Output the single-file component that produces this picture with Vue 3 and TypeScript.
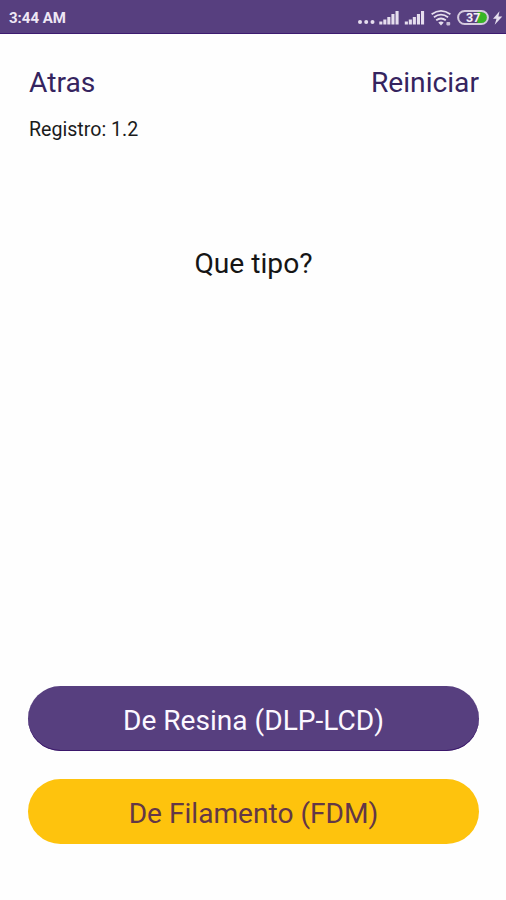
<script setup lang="ts">
interface Option {
  label: string
  tone: 'primary' | 'accent'
}

const options: Option[] = [
  { label: 'De Resina (DLP-LCD)', tone: 'primary' },
  { label: 'De Filamento (FDM)', tone: 'accent' },
]
</script>

<template>
  <div class="screen">
    <header class="status">
      <span class="clock">3:44 AM</span>
      <svg class="indicators" width="148" height="34" viewBox="358 0 148 34" aria-hidden="true">
        <g class="fill">
          <circle cx="360" cy="22" r="2" />
          <circle cx="366.2" cy="22" r="2" />
          <circle cx="372.5" cy="22" r="2" />
          <path d="M379.3 21.5h3.1v3h-3.1zM383.3 19.5h3.1v5h-3.1zM387.3 17h3.1v7.5h-3.1zM391.4 14h3.1v10.5h-3.1zM395.5 11h3.1v13.5h-3.1z" />
          <path d="M404.8 21.5h3.1v3h-3.1zM408.8 19.5h3.1v5h-3.1zM412.8 17h3.1v7.5h-3.1zM416.9 14h3.1v10.5h-3.1zM421 11h3.1v13.5h-3.1z" />
          <path d="M438.3 22.6q2.7-2 5.4 0L441 25.4z" />
          <rect x="446.4" y="22" width="3.8" height="3.4" rx="0.8" opacity="0.8" />
          <path d="M499.5 11.2L493 18.7h3.5l-1.8 6.1 7.6-8.3h-3.9z" />
        </g>
        <g class="arc">
          <path d="M431.6 14.2q9.4-6.8 18.8 0" />
          <path d="M433.9 17.3q7.1-5.2 14.2 0" />
          <path d="M436.2 20.3q4.8-3.6 9.6 0" />
        </g>
        <path class="charge" d="M477.5 12h4.2a5.6 5.6 0 0 1 0 11.2h-4.2z" />
        <rect class="shell" x="458.1" y="10.9" width="29.8" height="13.2" rx="6.6" />
        <text class="percent" x="466" y="22">37</text>
      </svg>
    </header>

    <main class="content">
      <nav class="nav">
        <a class="link">Atras</a>
        <a class="link restart">Reiniciar</a>
      </nav>
      <p class="record">Registro: 1.2</p>
      <h1 class="question">Que tipo?</h1>
      <div class="options">
        <button v-for="option in options" :key="option.label" class="option" :class="option.tone" type="button">
          {{ option.label }}
        </button>
      </div>
    </main>
  </div>
</template>

<style>
body {
  margin: 0;
  background: #fefefe;
}
</style>

<style scoped>
.screen {
  display: flex;
  flex-direction: column;
  box-sizing: border-box;
  height: 900px;
  background: #fefefe;
  font-family: Roboto, sans-serif;
}
.status {
  display: flex;
  align-items: center;
  justify-content: space-between;
  box-sizing: border-box;
  height: 34px;
  padding-left: 9px;
  background: #573f7f;
  border-bottom: 1px solid #3d1b70;
}
.clock {
  padding-top: 2px;
  color: #eee7f5;
  font-size: 15px;
  font-weight: 700;
  line-height: 20px;
}
.indicators {
  display: block;
  height: 34px;
}
.fill {
  fill: #e6deee;
}
.arc {
  fill: none;
  stroke: #e6deee;
  stroke-width: 1.8;
}
.shell {
  fill: none;
  stroke: #d5cbdf;
  stroke-width: 2;
}
.charge {
  fill: #37b526;
}
.percent {
  fill: #f4eef8;
  font-size: 12.5px;
  font-weight: 700;
}
.content {
  display: flex;
  flex: 1;
  flex-direction: column;
  padding: 31px 27px 56px 28px;
}
.nav {
  display: flex;
  justify-content: space-between;
  padding-left: 1px;
}
.link {
  color: #35245f;
  font-size: 28.2px;
  line-height: 36px;
}
.record {
  margin: 17px 0 0 1px;
  color: #1b1b1b;
  font-size: 19.6px;
  line-height: 24px;
}
.question {
  margin: 104px 0 0;
  color: #151515;
  font-size: 28.2px;
  font-weight: 400;
  line-height: 36px;
  text-align: center;
}
.options {
  display: flex;
  flex-direction: column;
  gap: 28px;
  margin-top: auto;
}
.option {
  height: 65px;
  padding: 5px 0 0;
  border: 0;
  border-radius: 33px;
  font-family: inherit;
  font-size: 28.1px;
  line-height: 36px;
}
.primary {
  background: #573f7f;
  box-shadow: inset 0 -1px #3b176b;
  color: #fcf8ff;
}
.accent {
  background: #fec30d;
  color: #633747;
}
</style>
